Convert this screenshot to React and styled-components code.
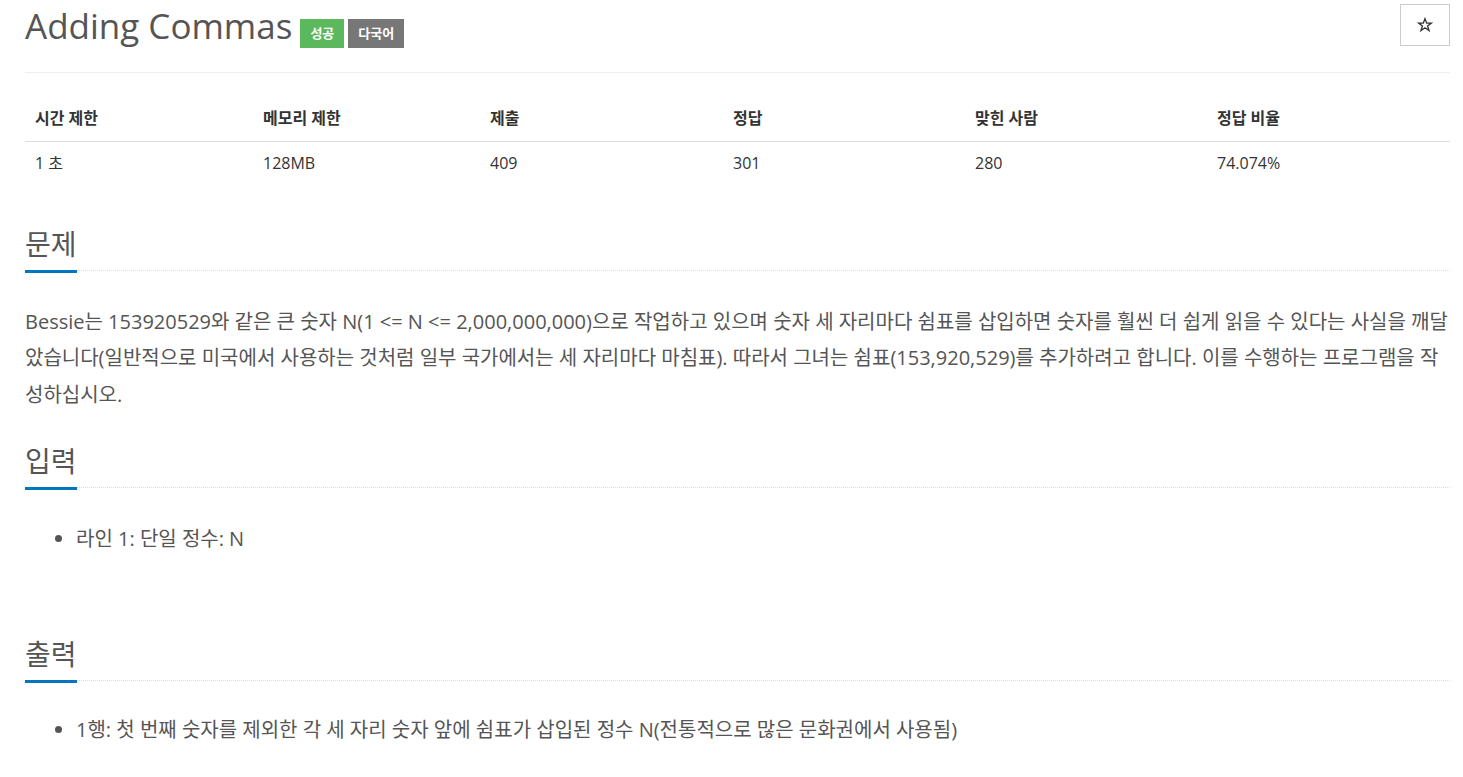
import React from 'react';
import styled, { createGlobalStyle } from 'styled-components';

const GlobalStyle = createGlobalStyle`
  body {
    margin: 0;
    background: #fff;
    font-family: "Open Sans", "Noto Sans CJK KR", sans-serif;
    color: #333;
  }
`;

const Page = styled.div`
  width: 1425px;
  margin-left: 25px;
`;

const PageHeader = styled.div`
  display: flex;
  justify-content: space-between;
  align-items: flex-start;
  padding-top: 4px;
  height: 68px;
  border-bottom: 1px solid #eee;
`;

const Title = styled.h1`
  display: flex;
  align-items: flex-start;
  gap: 4px;
  margin: 2px 0 0;
  font-size: 35px;
  font-weight: 400;
  line-height: 40px;
  color: #555;
`;

const TitleText = styled.span`
  margin-right: 4px;
`;

const Label = styled.span`
  display: inline-flex;
  align-items: center;
  justify-content: center;
  height: 29px;
  padding: 0 10px;
  margin-top: 13px;
  font-size: 13px;
  line-height: 1;
  font-weight: 700;
  color: #fff;
  background: ${p => p.$bg};
`;

const StarButton = styled.button`
  width: 50px;
  height: 42px;
  border: 1px solid #ccc;
  background: #fff;
  display: flex;
  align-items: center;
  justify-content: center;
  padding: 0;
  cursor: pointer;
`;

const Table = styled.table`
  width: 100%;
  table-layout: fixed;
  margin-top: 29px;
  border-collapse: collapse;
  font-size: 16px;
  line-height: 22.8px;
  color: #333;
`;

const Th = styled.th`
  text-align: left;
  font-weight: 700;
  padding: 5px 10px 11px;
  border-bottom: 1px solid #ddd;
  width: ${p => p.$w - 20}px;
`;

const Td = styled.td`
  padding: 10px 10px 8px;
`;

const Section = styled.section`
  margin-top: ${p => p.$mt}px;
`;

const Headline = styled.div`
  border-bottom: 1px dotted #ddd;
  margin-bottom: ${p => p.$mb}px;
`;

const H2 = styled.h2`
  display: inline-block;
  margin: 0 0 -3px;
  padding-bottom: 8px;
  font-size: 28px;
  font-weight: 400;
  line-height: 36px;
  color: #555;
  border-bottom: 3px solid #0076c0;
`;

const Para = styled.p`
  margin: 0;
  font-size: 20px;
  line-height: 36.6px;
  color: #555;
`;

const List = styled.ul`
  margin: 0;
  padding-left: 51px;
  font-size: 20px;
  line-height: 30px;
  color: #555;
`;

const StarIcon = () => (
  <svg width="16" height="16" viewBox="0 0 24 24" fill="none" stroke="#333" strokeWidth="2" strokeLinejoin="miter">
    <polygon points="12,2.5 14.6,9.2 21.6,9.2 15.9,13.4 18.1,20.5 12,16.2 5.9,20.5 8.1,13.4 2.4,9.2 9.4,9.2" />
  </svg>
);

const cols = [
  { h: '시간 제한', v: '1 초', w: 228 },
  { h: '메모리 제한', v: '128MB', w: 227 },
  { h: '제출', v: '409', w: 243 },
  { h: '정답', v: '301', w: 242 },
  { h: '맞힌 사람', v: '280', w: 242 },
  { h: '정답 비율', v: '74.074%', w: 243 },
];

export default function App() {
  return (
    <Page>
      <GlobalStyle />
      <PageHeader>
        <Title>
          <TitleText>Adding Commas</TitleText>
          <Label $bg="#5cb85c">성공</Label>
          <Label $bg="#777">다국어</Label>
        </Title>
        <StarButton><StarIcon /></StarButton>
      </PageHeader>

      <Table>
        <thead>
          <tr>{cols.map(c => <Th key={c.h} $w={c.w}>{c.h}</Th>)}</tr>
        </thead>
        <tbody>
          <tr>{cols.map(c => <Td key={c.h}>{c.v}</Td>)}</tr>
        </tbody>
      </Table>

      <Section $mt={43}>
        <Headline $mb={33}><H2>문제</H2></Headline>
        <Para>
          Bessie는 153920529와 같은 큰 숫자 N(1 &lt;= N &lt;= 2,000,000,000)으로 작업하고 있으며 숫자 세 자리마다 쉼표를 삽입하면 숫자를 훨씬 더 쉽게 읽을 수 있다는 사실을 깨달았습니다(일반적으로 미국에서 사용하는 것처럼 일부 국가에서는 세 자리마다 마침표). 따라서 그녀는 쉼표(153,920,529)를 추가하려고 합니다. 이를 수행하는 프로그램을 작성하십시오.
        </Para>
      </Section>

      <Section $mt={30}>
        <Headline $mb={36}><H2>입력</H2></Headline>
        <List><li>라인 1: 단일 정수: N</li></List>
      </Section>

      <Section $mt={82}>
        <Headline $mb={34}><H2>출력</H2></Headline>
        <List><li>1행: 첫 번째 숫자를 제외한 각 세 자리 숫자 앞에 쉼표가 삽입된 정수 N(전통적으로 많은 문화권에서 사용됨)</li></List>
      </Section>
    </Page>
  );
}
